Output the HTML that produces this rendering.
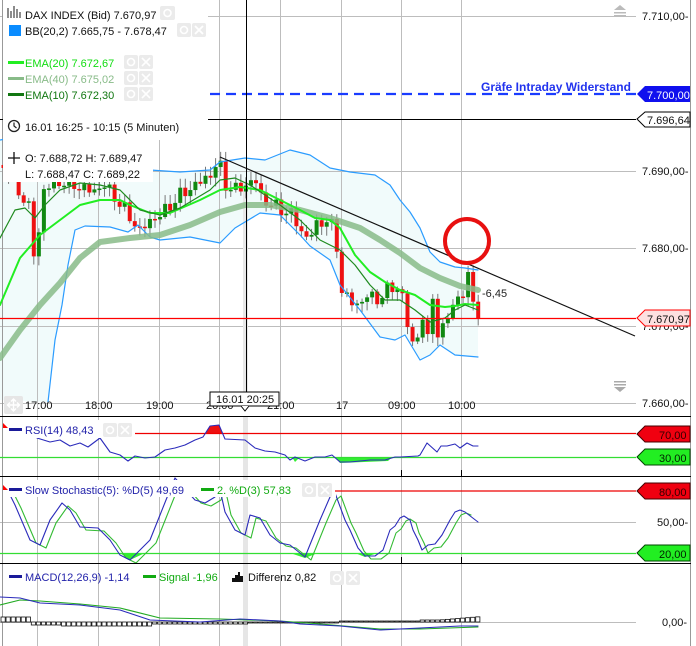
<!DOCTYPE html>
<html><head><meta charset="utf-8">
<style>
html,body{margin:0;padding:0;background:#fff;}
body{width:696px;height:646px;overflow:hidden;position:relative;font-family:"Liberation Sans",Arial,sans-serif;}
svg{position:absolute;left:0;top:0;}
svg text{font-family:"Liberation Sans",Arial,sans-serif;font-size:11px;}
</style></head><body>
<svg id="s" width="696" height="646" viewBox="0 0 696 646" xmlns="http://www.w3.org/2000/svg">
<rect width="696" height="646" fill="#fff"/>
<path id="bandfill" fill="#f1fbfb" d=""/>
<g stroke="#bdbdbd" stroke-width="1">
<line x1="37.5" y1="0" x2="37.5" y2="646"/><line x1="98.5" y1="0" x2="98.5" y2="646"/>
<line x1="159.5" y1="0" x2="159.5" y2="646"/><line x1="219.5" y1="0" x2="219.5" y2="646"/>
<line x1="280.5" y1="0" x2="280.5" y2="646"/><line x1="341.5" y1="0" x2="341.5" y2="646"/>
<line x1="401.5" y1="0" x2="401.5" y2="646"/><line x1="461.5" y1="0" x2="461.5" y2="646"/>
<line x1="0" y1="16.5" x2="636" y2="16.5"/><line x1="0" y1="171.5" x2="636" y2="171.5"/>
<line x1="0" y1="248.5" x2="636" y2="248.5"/><line x1="0" y1="326.5" x2="636" y2="326.5"/>
<line x1="0" y1="403.5" x2="636" y2="403.5"/>
<line x1="0" y1="522.5" x2="636" y2="522.5"/><line x1="0" y1="622.5" x2="636" y2="622.5"/>
</g>
<rect x="243" y="416" width="5" height="230" fill="#e6e6e6"/>
<line x1="2.5" y1="0" x2="2.5" y2="646" stroke="#999"/>
<line x1="690.5" y1="0" x2="690.5" y2="646" stroke="#999"/>
<g id="dyn"></g>
<line x1="220" y1="157" x2="635" y2="336" stroke="#111" stroke-width="1.2"/>
<circle cx="467" cy="241" r="22" fill="none" stroke="#e81010" stroke-width="4"/>
<line x1="210" y1="94" x2="636" y2="94" stroke="#1a3cff" stroke-width="2.2" stroke-dasharray="10,6"/>
<text x="481" y="91" fill="#2233ee" font-weight="bold" style="font-size:12px">Gräfe Intraday Widerstand</text>
<line x1="0" y1="119.5" x2="636" y2="119.5" stroke="#000"/>
<line x1="246.5" y1="0" x2="246.5" y2="394" stroke="#000"/>
<line x1="0" y1="318.5" x2="636" y2="318.5" stroke="#f00" stroke-width="1.2"/>
<text x="482" y="297" fill="#222">-6,45</text>
<path d="M614 10 L620 5 L626 10 Z M614 12h12v1.5h-12z M614 15h12v1.5h-12z" fill="#bbb"/>
<path d="M614 381h12v1.5h-12z M614 384h12v1.5h-12z M614 387 L620 392 L626 387 Z" fill="#aaa"/>
<g fill="#111">
<text x="642" y="20">7.710,00-</text>
<text x="642" y="175">7.690,00-</text>
<text x="642" y="252">7.680,00-</text>
<text x="642" y="330">7.670,00-</text>
<text x="642" y="407">7.660,00-</text>
<text x="657" y="526">50,00-</text>
<text x="662" y="626">0,00-</text>
</g>
<path d="M637 94 L645 86 H690 V102 H645 Z" fill="#1010ee"/>
<text x="647" y="99" fill="#fff">7.700,00</text>
<path d="M637 119 L645 112 H690 V127 H645 Z" fill="#fff" stroke="#000"/>
<text x="647" y="124" fill="#111">7.696,64</text>
<path d="M637 318 L645 310 H690 V326 H645 Z" fill="#fde0e0" stroke="#f00"/>
<text x="647" y="323" fill="#111">7.670,97</text>
<path d="M637 434 L645 426 H690 V442 H645 Z" fill="#f00010" stroke="#400"/>
<text x="659" y="439" fill="#300">70,00</text>
<path d="M637 457 L645 449 H690 V465 H645 Z" fill="#22ee22" stroke="#040"/>
<text x="659" y="462" fill="#020">30,00</text>
<path d="M637 491 L645 483 H690 V499 H645 Z" fill="#f00010" stroke="#400"/>
<text x="659" y="496" fill="#300">80,00</text>
<path d="M637 553 L645 545 H690 V561 H645 Z" fill="#22ee22" stroke="#040"/>
<text x="659" y="558" fill="#020">20,00</text>
<g stroke="#000"><line x1="0" y1="416.5" x2="691" y2="416.5"/><line x1="0" y1="476.5" x2="691" y2="476.5"/><line x1="0" y1="563.5" x2="691" y2="563.5"/></g>
<g stroke="#000"><line x1="401.5" y1="470" x2="401.5" y2="476"/><line x1="461.5" y1="470" x2="461.5" y2="476"/><line x1="401.5" y1="557" x2="401.5" y2="563"/><line x1="461.5" y1="557" x2="461.5" y2="563"/></g>
<rect x="3" y="0" width="205" height="140" fill="#fff"/>
<rect x="3" y="140" width="150" height="42" fill="#fff"/>
<g>
<path d="M8 8v10M11 11v7M14 6v12M17 9v9M20 12v6" stroke="#666" stroke-width="1.5"/>
<text x="25" y="19" fill="#111">DAX INDEX (Bid) 7.670,97</text>
<rect x="160" y="6" width="15" height="14" rx="2" fill="#ebebeb"/><circle cx="167.5" cy="13" r="3.5" fill="none" stroke="#fff" stroke-width="1.6"/>
<rect x="9" y="25" width="12" height="11" fill="#0a8cff"/>
<text x="25" y="35" fill="#111">BB(20,2) 7.665,75 - 7.678,47</text>
<rect x="177" y="23" width="14" height="14" rx="2" fill="#ebebeb"/><circle cx="184" cy="30" r="3.5" fill="none" stroke="#fff" stroke-width="1.6"/>
<rect x="192" y="23" width="14" height="14" rx="2" fill="#ebebeb"/><path d="M195 26l8 8M203 26l-8 8" stroke="#fff" stroke-width="1.8"/>
<rect x="8" y="61" width="16" height="3" fill="#22ee22"/><text x="25" y="67" fill="#11dd11">EMA(20) 7.672,67</text>
<rect x="8" y="77" width="16" height="3" fill="#88bb88"/><text x="25" y="83" fill="#88bb88">EMA(40) 7.675,02</text>
<rect x="8" y="93" width="16" height="3" fill="#117711"/><text x="25" y="99" fill="#117711">EMA(10) 7.672,30</text>
<g fill="#ebebeb"><rect x="124" y="55" width="14" height="14" rx="2"/><rect x="139" y="55" width="14" height="14" rx="2"/><rect x="124" y="71" width="14" height="14" rx="2"/><rect x="139" y="71" width="14" height="14" rx="2"/><rect x="124" y="87" width="14" height="14" rx="2"/><rect x="139" y="87" width="14" height="14" rx="2"/></g>
<g stroke="#fff" stroke-width="1.6" fill="none"><circle cx="131" cy="62" r="3.5"/><circle cx="131" cy="78" r="3.5"/><circle cx="131" cy="94" r="3.5"/><path d="M142 58l8 8M150 58l-8 8M142 74l8 8M150 74l-8 8M142 90l8 8M150 90l-8 8"/></g>
<circle cx="14" cy="126" r="5.5" fill="none" stroke="#222" stroke-width="1.3"/><path d="M14 122.5v3.5l2.5 2" stroke="#222" fill="none" stroke-width="1.2"/>
<text x="25" y="131" fill="#111">16.01 16:25 - 10:15 (5 Minuten)</text>
<path d="M14 152v12M8 158h12" stroke="#111" stroke-width="1.3"/>
<text x="25" y="162" fill="#111">O: 7.688,72 H: 7.689,47</text>
<text x="25" y="178" fill="#111">L:  7.688,47 C: 7.689,22</text>
</g>
<g fill="#111"><text x="25" y="409">17:00</text><text x="85" y="409">18:00</text><text x="146" y="409">19:00</text><text x="206" y="409">20:00</text><text x="267" y="409">21:00</text><text x="336" y="409">17</text><text x="388" y="409">09:00</text><text x="448" y="409">10:00</text></g>
<rect x="4" y="396" width="19" height="18" rx="2" fill="#e6e6e6"/><path d="M13.5 399v12M7.5 405h12M11 401.5l2.5-2.5 2.5 2.5M11 408.5l2.5 2.5 2.5-2.5M10 402.5l-2.5 2.5 2.5 2.5M17 402.5l2.5 2.5-2.5 2.5" stroke="#fff" stroke-width="1.4" fill="none"/>
<rect x="210" y="392" width="69" height="14" fill="#fff" stroke="#000"/>
<path d="M241 406 L245 411 L249 406" fill="#fff" stroke="#000"/>
<text x="216" y="403" fill="#111">16.01 20:25</text>
<rect x="3" y="420" width="132" height="18" fill="#fff"/>
<path d="M3 423 L8 428 H3Z" fill="#f00"/><rect x="9" y="428" width="13" height="3" fill="#1a1a99"/>
<text x="25" y="434" fill="#2222aa">RSI(14) 48,43</text>
<rect x="103" y="423" width="14" height="14" rx="2" fill="#ebebeb"/><rect x="118" y="423" width="14" height="14" rx="2" fill="#ebebeb"/>
<circle cx="110" cy="430" r="3.5" fill="none" stroke="#fff" stroke-width="1.6"/><path d="M121 426l8 8M129 426l-8 8" stroke="#fff" stroke-width="1.6"/>
<rect x="3" y="480" width="333" height="17" fill="#fff"/>
<path d="M3 485 L8 490 H3Z" fill="#f00"/><rect x="9" y="488" width="13" height="3" fill="#1a1a99"/>
<text x="25" y="494" fill="#2222aa">Slow Stochastic(5): %D(5) 49,69</text>
<rect x="201" y="488" width="13" height="3" fill="#11aa11"/>
<text x="217" y="494" fill="#11aa11">2. %D(3) 57,83</text>
<rect x="302" y="483" width="14" height="14" rx="2" fill="#ebebeb"/><rect x="318" y="483" width="14" height="14" rx="2" fill="#ebebeb"/>
<circle cx="309" cy="490" r="3.5" fill="none" stroke="#fff" stroke-width="1.6"/><path d="M321 486l8 8M329 486l-8 8" stroke="#fff" stroke-width="1.6"/>
<line x1="335" y1="491" x2="636" y2="491" stroke="#e00" stroke-width="1.2"/>
<rect x="9" y="575" width="13" height="3" fill="#1a1a99"/>
<text x="25" y="581" fill="#2222aa">MACD(12,26,9) -1,14</text>
<rect x="143" y="575" width="13" height="3" fill="#11aa11"/>
<text x="159" y="581" fill="#11aa11">Signal -1,96</text>
<path d="M232 582v-4h3v-3h3v-3h2v4h3v6z" fill="#111"/>
<text x="248" y="581" fill="#111">Differenz 0,82</text>
<rect x="330" y="571" width="14" height="14" rx="2" fill="#ebebeb"/><rect x="346" y="571" width="14" height="14" rx="2" fill="#ebebeb"/>
<circle cx="337" cy="578" r="3.5" fill="none" stroke="#fff" stroke-width="1.6"/><path d="M349 574l8 8M357 574l-8 8" stroke="#fff" stroke-width="1.6"/>
</svg>
<script>
(function(){
var NS="http://www.w3.org/2000/svg",g=document.getElementById("dyn");
function el(t,a){var e=document.createElementNS(NS,t);for(var k in a)e.setAttribute(k,a[k]);g.appendChild(e);return e;}
function pl(pts,c,w,extra){var d="M"+pts.map(function(p){return p[0]+" "+p[1]}).join(" L");var a={d:d,fill:"none",stroke:c,"stroke-width":w,"stroke-linejoin":"round","stroke-linecap":"round"};if(extra)for(var k in extra)a[k]=extra[k];return el("path",a);}
function interp(pts,x){for(var i=0;i<pts.length-1;i++){if(x>=pts[i][0]&&x<=pts[i+1][0]){var t=(x-pts[i][0])/(pts[i+1][0]-pts[i][0]);return pts[i][1]+t*(pts[i+1][1]-pts[i][1]);}}return pts[pts.length-1][1];}
var up=[[0,140],[30,135],[60,160],[100,165],[150,170],[180,172],[210,170],[220,162],[245,158],[265,160],[290,150],[310,155],[330,168],[350,172],[375,175],[390,185],[400,200],[410,212],[420,228],[430,252],[440,262],[455,267],[465,268],[478,270]];
var lo=[[48,402],[55,340],[62,305],[68,265],[75,230],[85,226],[110,227],[128,232],[138,225],[150,237],[160,240],[190,237],[220,243],[235,228],[260,213],[280,215],[300,235],[310,246],[330,260],[340,285],[360,310],[380,337],[395,340],[405,335],[420,360],[430,355],[440,345],[455,355],[478,357]];
var d="M"+up.map(function(p){return p[0]+" "+p[1]}).join(" L")+" L478 357";
var lo2=lo.slice().reverse();d+=" L"+lo2.map(function(p){return p[0]+" "+p[1]}).join(" L")+" L0 400 Z";
document.getElementById("bandfill").setAttribute("d",d);
el("rect",{x:243,y:182,width:5,height:210,fill:"#e8e8e8"});
var cl=[[3,165],[10,175],[20,195],[28,205],[33,255],[38,235],[43,190],[55,182],[70,183],[85,190],[95,190],[105,185],[120,205],[128,215],[135,225],[140,232],[145,225],[150,220],[160,215],[170,205],[180,195],[195,185],[210,175],[218,160],[225,185],[235,190],[245,185],[255,180],[262,200],[272,205],[282,210],[292,215],[300,230],[308,240],[315,225],[325,220],[335,230],[340,290],[348,300],[358,305],[368,295],[380,300],[390,285],[400,290],[405,310],[410,345],[415,340],[420,330],[425,305],[428,352],[432,290],[436,330],[440,352],[444,315],[448,312],[452,305],[457,300],[462,300],[466,262],[471,300],[475,297],[478,318]];
var prev=165;
for(var i=0;i<95;i++){var x=3+i*5.05;if(x>479)break;
var c=interp(cl,x)+Math.sin(i*2.3)*5+Math.cos(i*1.7)*3;
if(x>476)c=318;
var o=prev;prev=c;var top=Math.min(o,c),bot=Math.max(o,c);
if(bot-top<1.5){bot=top+1.5;}
var hi=top-2-Math.abs(Math.sin(i*3.1))*7,lw=bot+2+Math.abs(Math.cos(i*2.7))*7;
var col=c<o?"#118811":"#ee1111";
el("line",{x1:x+0.5,y1:hi,x2:x+0.5,y2:lw,stroke:"#777","stroke-width":1});
el("rect",{x:x-1.5,y:top,width:4,height:bot-top,fill:col});}
pl(up,"#2b9cff",1.2);pl(lo,"#2b9cff",1.2);
pl([[0,358],[20,330],[40,305],[60,283],[80,258],[100,242],[130,238],[160,235],[190,225],[220,212],[245,205],[270,205],[300,210],[330,218],[360,228],[380,240],[400,253],[420,268],[440,278],[460,286],[478,290]],"#88bb88",6,{opacity:0.85});
pl([[0,305],[20,258],[40,235],[60,220],[80,205],[100,200],[120,200],[130,205],[150,213],[170,213],[200,200],[220,190],[240,187],[260,190],[280,200],[300,210],[315,218],[330,220],[340,228],[355,255],[370,272],[385,282],[400,290],[415,295],[430,305],[445,307],[455,306],[465,304],[478,305]],"#22ee22",2);
pl([[0,238],[15,210],[25,208],[35,218],[45,205],[60,190],[80,183],[100,185],[120,190],[140,210],[160,215],[180,208],[210,190],[220,180],[235,178],[250,185],[265,195],[280,205],[300,220],[320,240],[340,250],[355,265],[370,285],[385,300],[400,300],[415,310],[430,322],[445,318],[455,310],[465,305],[478,310]],"#1e8a1e",1.2);
var rsi=[[37,438],[50,442],[60,440],[70,446],[80,443],[88,447],[100,438],[110,452],[120,455],[128,461],[135,456],[145,458],[155,457],[165,450],[175,448],[185,445],[195,440],[203,437],[210,426],[219,425],[225,439],[245,440],[255,448],[265,451],[275,452],[285,455],[290,460],[295,457],[305,461],[315,457],[325,457],[332,455],[340,462],[350,462],[370,460],[385,460],[395,457],[400,457],[418,456],[420,455],[427,443],[437,452],[441,446],[447,446],[455,444],[460,448],[467,443],[473,446],[478,446]];
el("path",{d:"M206 433 L210 426 L219 425 L222 433 Z",fill:"#ee1111"});
el("path",{d:"M292 457 L295 462 L300 457 Z M335 457 L340 463 L388 461 L392 457 Z",fill:"#33ee33"});
el("line",{x1:135,y1:433.5,x2:636,y2:433.5,stroke:"#e00","stroke-width":1.2});
el("line",{x1:0,y1:457.5,x2:636,y2:457.5,stroke:"#33dd33","stroke-width":1.2});
pl(rsi,"#2b2bbb",1.1);
el("line",{x1:0,y1:553.5,x2:636,y2:553.5,stroke:"#33dd33","stroke-width":1.2});
el("path",{d:"M120 553 L130 560 L145 553 Z M290 553 L305 558 L318 553 Z M355 553 L365 557 L378 553 Z",fill:"#33ee33"});
var st=[[5,485],[15,505],[30,540],[40,545],[50,520],[62,503],[70,510],[80,527],[98,528],[110,540],[120,555],[130,560],[140,550],[150,540],[160,515],[170,490],[175,478],[195,500],[205,503],[215,497],[219,485],[225,512],[235,530],[245,535],[250,515],[260,518],[270,535],[280,543],[290,545],[305,557],[320,520],[330,497],[335,493],[345,520],[350,530],[358,548],[365,556],[375,556],[383,550],[390,530],[395,526],[400,518],[404,516],[410,520],[413,530],[418,540],[422,550],[428,545],[435,544],[442,535],[450,520],[455,512],[460,510],[465,512],[478,522]];
pl(st.map(function(p){return [p[0]+6,p[1]+3]}).filter(function(p){return p[0]<=478}),"#33bb33",1.1);
pl(st,"#2b2bbb",1.1);
for(var i=0;i<95;i++){var x=3+i*5.05;if(x>479)break;var h=(x<30?-5:x<60?3:x<150?4:x<250?2:x<340?1:x<420?-1:-2);if(x>440)h=-2-(x-440)/12;
var hh=Math.abs(h);if(hh<1)hh=1;el("rect",{x:x-2,y:h<0?622-hh:622,width:4.2,height:hh,fill:"#fff",stroke:"#111","stroke-width":0.8});}
pl([[0,605],[20,600],[40,601],[80,604],[120,608],[160,618],[220,619],[280,621],[320,624],[380,629],[420,629],[478,627]],"#22aa22",1.1);
pl([[0,597],[20,598],[40,603],[80,605],[120,610],[150,620],[200,622],[240,619],[280,621],[300,624],[340,626],[380,630],[420,628],[460,626],[478,626]],"#2b2bbb",1.1);
})();
</script>
</body></html>
